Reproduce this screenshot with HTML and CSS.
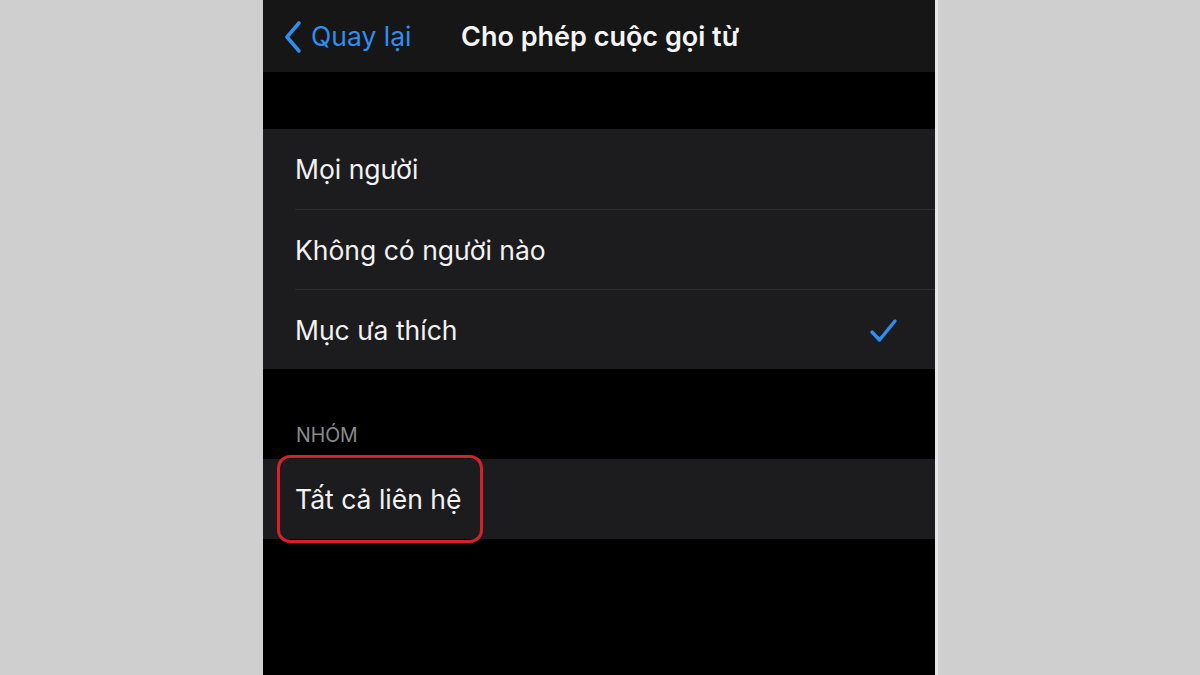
FILE: index.html
```html
<!DOCTYPE html>
<html lang="vi">
<head>
<meta charset="utf-8">
<title>Cho phép cuộc gọi từ</title>
<link rel="stylesheet" href="styles.css">
</head>
<body>
<div class="stage">
  <div class="phone">
    <header class="nav">
      <div class="back">
        <svg class="chev" width="20" height="34" viewBox="0 0 20 34"><path d="M16 3 L4 17 L16 31" fill="none" stroke="#2f8ff0" stroke-width="3.6" stroke-linecap="round" stroke-linejoin="round"/></svg>
        <span class="back-text">Quay lại</span>
      </div>
      <div class="title">Cho phép cuộc gọi từ</div>
    </header>
    <div class="spacer-top"></div>
    <div class="group">
      <div class="row">Mọi người</div>
      <div class="row sep">Không có người nào</div>
      <div class="row sep">
        <span>Mục ưa thích</span>
        <svg class="check" width="30" height="28" viewBox="0 0 30 28"><path d="M3 15 L10.5 23 L26 4" fill="none" stroke="#2f8ff0" stroke-width="3.4" stroke-linecap="round" stroke-linejoin="round"/></svg>
      </div>
    </div>
    <div class="section-label">NHÓM</div>
    <div class="group">
      <div class="row highlight">
        <span>Tất cả liên hệ</span>
        <div class="ring"></div>
      </div>
    </div>
  </div>
</div>
</body>
</html>
```
FILE: styles.css
```css
html, body {
  margin: 0;
  padding: 0;
  background: #cfcfcf;
}
.stage {
  width: 1200px;
  height: 675px;
  display: flex;
  padding-left: 263px;
  box-sizing: border-box;
  overflow: hidden;
}
.phone {
  width: 672px;
  height: 675px;
  background: #000;
  border-right: 3px solid #e6e6e6;
  font-family: Inter, "Noto Sans", sans-serif;
  color: #f2f2f2;
  display: flex;
  flex-direction: column;
}
.nav {
  height: 72px;
  background: #161616;
  display: flex;
  align-items: center;
  flex-shrink: 0;
}
.back {
  display: flex;
  align-items: center;
  margin-left: 20px;
  width: 178px;
}
.chev {
  display: block;
  margin-top: 1px;
}
.back-text {
  color: #2f8ff0;
  font-size: 26.5px;
  margin-left: 8px;
}
.title {
  font-size: 27px;
  font-weight: 600;
  color: #f4f4f4;
}
.spacer-top {
  height: 57px;
  flex-shrink: 0;
}
.group {
  background: #1c1c1e;
  flex-shrink: 0;
}
.row {
  height: 80px;
  margin-left: 32px;
  padding-right: 36px;
  display: flex;
  align-items: center;
  justify-content: space-between;
  font-size: 26.5px;
  box-sizing: border-box;
  position: relative;
}
.row.sep {
  border-top: 1px solid #2e2e30;
}
.check {
  display: block;
  margin-top: 2px;
}
.section-label {
  height: 90px;
  box-sizing: border-box;
  padding: 54px 0 0 33px;
  font-size: 19.5px;
  color: #8a8a8e;
  flex-shrink: 0;
}
.ring {
  position: absolute;
  left: -18px;
  top: -4px;
  width: 206px;
  height: 88px;
  box-sizing: border-box;
  border: 3px solid #d5212b;
  border-radius: 13px;
}
```
